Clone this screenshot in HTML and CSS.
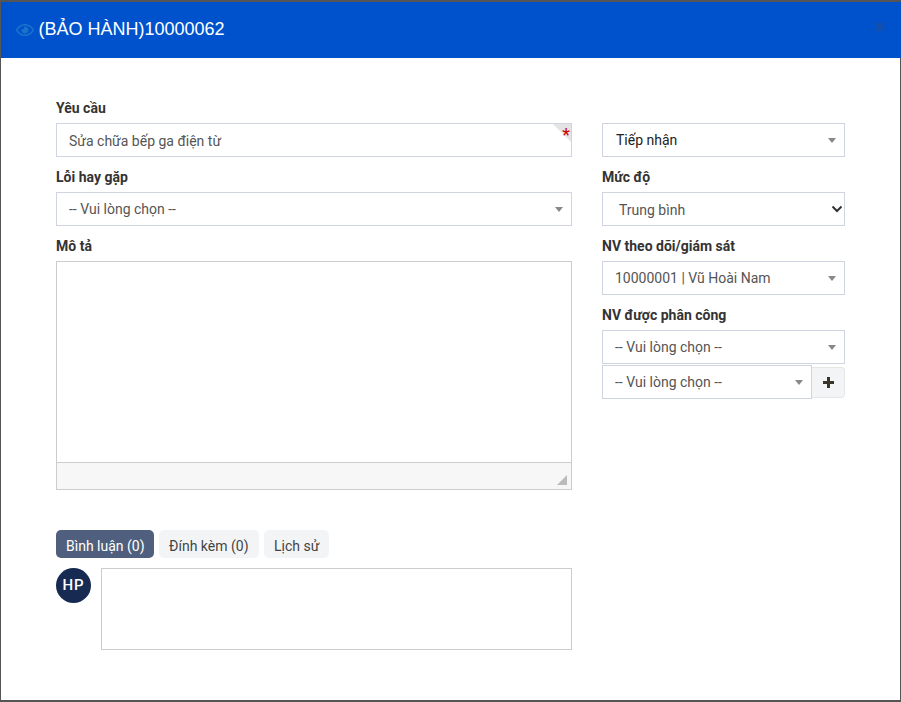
FILE: index.html
```html
<!DOCTYPE html>
<html lang="en">

<head>
    <meta charset="UTF-8">
    <meta name="viewport" content="width=device-width, initial-scale=1.0">
    <title>Bảo hành</title>
    <link rel="stylesheet" href="styles.css">
</head>

<body>
    <div class="modal">
        <div class="modal-header">
            <svg class="eye" viewBox="0 0 576 512" width="18" height="16">
                <path fill="currentColor" d="M288 144a110.94 110.94 0 0 0-31.24 5 55.4 55.4 0 0 1 7.24 27 56 56 0 0 1-56 56 55.4 55.4 0 0 1-27-7.24A111.71 111.71 0 1 0 288 144zm284.52 97.4C518.29 135.59 410.93 64 288 64S57.68 135.64 3.48 241.41a32.35 32.35 0 0 0 0 29.19C57.71 376.41 165.07 448 288 448s230.32-71.64 284.52-177.41a32.35 32.35 0 0 0 0-29.19zM288 400c-98.65 0-189.09-55-237.93-144C98.91 167 189.34 112 288 112s189.09 55 237.93 144C477.1 345 386.66 400 288 400z"/>
            </svg>
            <h1>(BẢO HÀNH)10000062</h1>
            <svg class="close" viewBox="0 0 10 10" width="10" height="10">
                <path d="M1 1l8 8M9 1l-8 8" fill="none" stroke="currentColor" stroke-width="2.4"/>
            </svg>
        </div>

        <div class="modal-body">
            <div class="col-main">
                <label>Yêu cầu</label>
                <div class="field">
                    <div class="control text">Sửa chữa bếp ga điện từ</div>
                    <span class="corner"></span>
                    <span class="star">*</span>
                </div>

                <label>Lỗi hay gặp</label>
                <div class="field">
                    <div class="control select">-- Vui lòng chọn --<span class="caret"></span></div>
                </div>

                <label>Mô tả</label>
                <div class="editor">
                    <div class="editor-area"></div>
                    <div class="editor-status"><span class="resize"></span></div>
                </div>

                <div class="tabs">
                    <span class="tab active">Bình luận (0)</span>
                    <span class="tab files">Đính kèm (0)</span>
                    <span class="tab">Lịch sử</span>
                </div>

                <div class="comment">
                    <div class="avatar">HP</div>
                    <div class="comment-box"></div>
                </div>
            </div>

            <div class="col-side">
                <div class="field">
                    <div class="control select dark">Tiếp nhận<span class="caret"></span></div>
                </div>

                <label>Mức độ</label>
                <div class="field">
                    <div class="control select level">Trung bình
                        <svg class="chevron" viewBox="0 0 12 8" width="12" height="8">
                            <path d="M1.5 1.5 6 6l4.5-4.5" fill="none" stroke="#333" stroke-width="2"/>
                        </svg>
                    </div>
                </div>

                <label>NV theo dõi/giám sát</label>
                <div class="field">
                    <div class="control select">10000001 | Vũ Hoài Nam<span class="caret"></span></div>
                </div>

                <label>NV được phân công</label>
                <div class="field tight">
                    <div class="control select">-- Vui lòng chọn --<span class="caret"></span></div>
                </div>
                <div class="input-group">
                    <div class="control select">-- Vui lòng chọn --<span class="caret"></span></div>
                    <button class="add" type="button">
                        <svg viewBox="0 0 11 11" width="11" height="11">
                            <path d="M4 0h3v4h4v3H7v4H4V7H0V4h4z" fill="#3a3428"/>
                        </svg>
                    </button>
                </div>
            </div>
        </div>
    </div>
</body>

</html>
```

FILE: styles.css
```css
* {
    box-sizing: border-box;
}

body {
    margin: 0;
    height: 702px;
    overflow: hidden;
    background-color: #555;
    font-family: Roboto, "Liberation Sans", sans-serif;
    font-size: 14px;
    color: #495057;
}

.modal {
    margin: 2px 1px 2px 1px;
    height: 698px;
    background: #fff;
}

.modal-header {
    height: 56px;
    margin-right: -1px;
    background-color: #0052cc;
    display: flex;
    align-items: center;
    padding: 0 16px 1px 15px;
}

.eye {
    color: #1a73c8;
    margin-right: 4.5px;
}

.modal-header h1 {
    flex: 1;
    margin: 0;
    font-family: "Liberation Sans", Arial, sans-serif;
    font-size: 18px;
    font-weight: 400;
    color: #fff;
}

.close {
    margin-top: -5px;
    color: #1a4fa3;
}

.modal-body {
    display: flex;
    gap: 30px;
    padding: 42px 55px 0;
}

.col-main {
    width: 516px;
}

.col-side {
    width: 243px;
    padding-top: 23px;
}

label {
    display: block;
    height: 17px;
    line-height: 17px;
    margin-bottom: 6px;
    font-weight: 700;
    color: #333;
}

.field {
    position: relative;
    margin-bottom: 12px;
}

.field.tight {
    margin-bottom: 1px;
}

.control {
    height: 34px;
    line-height: 32px;
    padding: 0 12px;
    border: 1px solid #d0d4e0;
    background: #fff;
    color: #555;
}

.text {
    line-height: 34px;
}

.select {
    position: relative;
    white-space: nowrap;
}

.dark {
    padding-left: 13px;
    color: #222;
}

.level {
    padding-left: 16px;
    line-height: 34px;
}

.caret {
    position: absolute;
    right: 8px;
    top: 14px;
    border-style: solid;
    border-width: 5px 4px 0;
    border-color: #888 transparent transparent;
}

.chevron {
    position: absolute;
    right: 1px;
    top: 12px;
}

.corner {
    position: absolute;
    top: 1px;
    right: 1px;
    border-style: solid;
    border-width: 0 18px 18px 0;
    border-color: transparent #e4e4e4 transparent transparent;
}

.star {
    position: absolute;
    top: 3px;
    right: 2px;
    font-size: 18px;
    line-height: 18px;
    color: #c00;
}

.editor {
    height: 229px;
    border: 1px solid #ccc;
    display: flex;
    flex-direction: column;
}

.editor-area {
    flex: 1;
}

.editor-status {
    position: relative;
    height: 27px;
    border-top: 1px solid #ccc;
    background: #f7f7f7;
}

.resize {
    position: absolute;
    right: 4px;
    bottom: 4px;
    border-style: solid;
    border-width: 0 0 10px 10px;
    border-color: transparent transparent #bbb transparent;
}

.tabs {
    display: flex;
    gap: 5px;
    margin-top: 40px;
}

.tab {
    height: 28px;
    line-height: 32px;
    padding: 0 10px;
    border-radius: 5px;
    background: #f3f4f6;
    color: #444;
}

.tab.active {
    padding-right: 9px;
    background: #4f5f7d;
    color: #fff;
}

.tab.files {
    padding: 0 10.5px;
}

.comment {
    display: flex;
    gap: 10px;
    margin-top: 10px;
}

.avatar {
    width: 35px;
    height: 35px;
    border-radius: 50%;
    background: #162a52;
    color: #fff;
    font-weight: 500;
    font-size: 15px;
    letter-spacing: 1px;
    line-height: 35px;
    text-align: center;
}

.comment-box {
    flex: 1;
    height: 82px;
    border: 1px solid #ccc;
}

.input-group {
    display: flex;
}

.input-group .control {
    width: 210px;
}

.add {
    width: 33px;
    height: 31px;
    margin-top: 2px;
    padding: 0;
    border: 1px solid #e6e6e6;
    border-left: none;
    border-radius: 0 4px 4px 0;
    background: #f3f4f6;
    display: flex;
    align-items: center;
    justify-content: center;
}
```
